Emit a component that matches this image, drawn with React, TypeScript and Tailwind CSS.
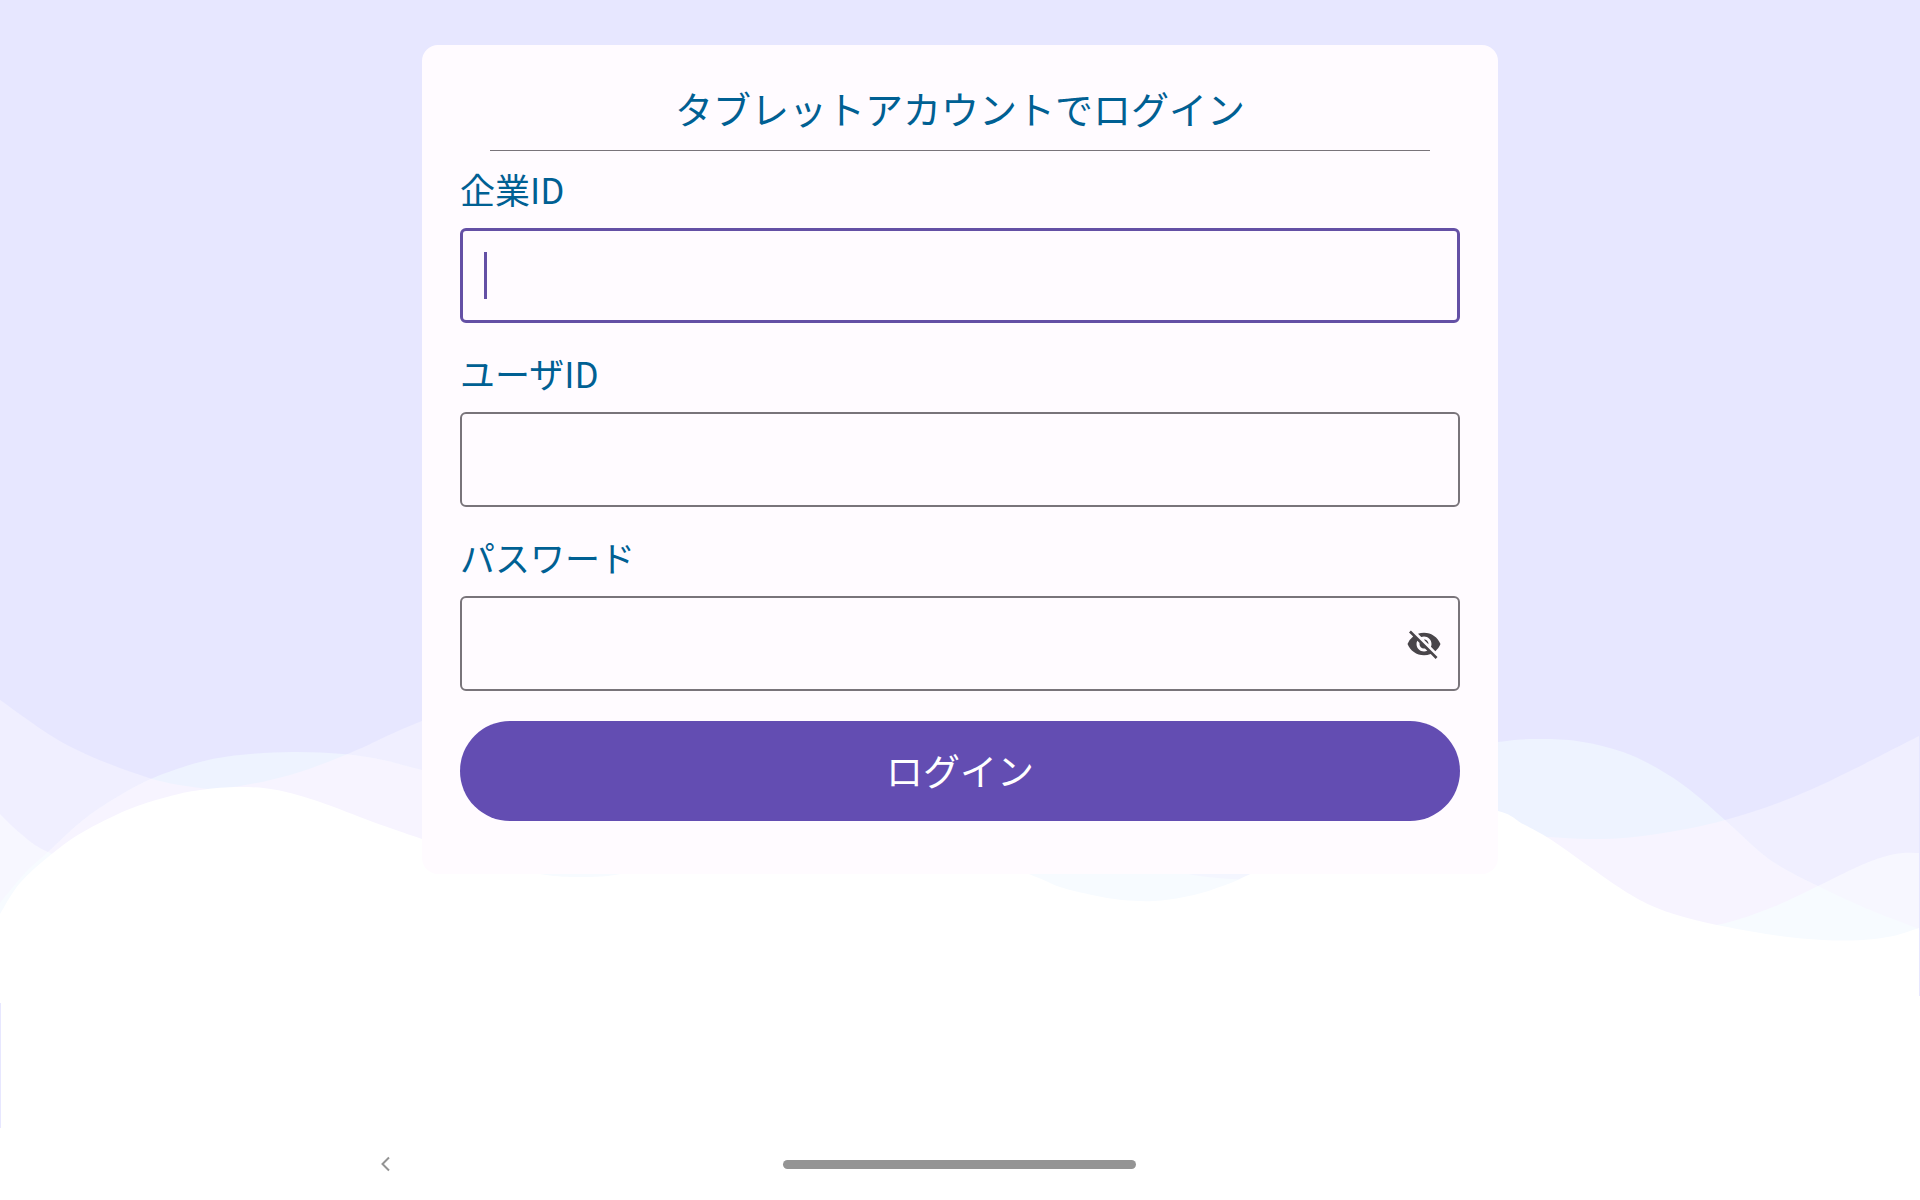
import { useState } from "react";
import { MdVisibilityOff, MdVisibility } from "react-icons/md";

type Point = [number, number];

/* Smooth curve through the given points (Catmull-Rom converted to cubic segments). */
function curve(points: Point[]): string {
  let d = `M${points[0][0]} ${points[0][1]}`;
  for (let i = 0; i < points.length - 1; i++) {
    const a = points[Math.max(i - 1, 0)];
    const b = points[i];
    const c = points[i + 1];
    const e = points[Math.min(i + 2, points.length - 1)];
    const c1 = [b[0] + (c[0] - a[0]) / 6, b[1] + (c[1] - a[1]) / 6];
    const c2 = [c[0] - (e[0] - b[0]) / 6, c[1] - (e[1] - b[1]) / 6];
    d += `C${c1[0]} ${c1[1]} ${c2[0]} ${c2[1]} ${c[0]} ${c[1]}`;
  }
  return d;
}

const wave = (points: Point[]) => `${curve(points)}V1128H0Z`;

const WAVE_FAR = wave([
  [0, 700], [67, 745], [143, 776], [193, 787], [227, 788], [290, 775], [350, 753], [422, 721],
  [560, 670], [700, 640], [850, 650], [1000, 700], [1200, 770], [1400, 815], [1500, 832],
  [1587, 839], [1650, 835], [1725, 820], [1810, 790], [1919, 736],
]);

const WAVE_MIDDLE = wave([
  [0, 903], [25, 873], [48, 852], [83, 820], [117, 797], [153, 778], [200, 762], [240, 755], [293, 752],
  [343, 754], [383, 760], [422, 770], [600, 815], [800, 850], [1000, 840], [1200, 800], [1400, 760],
  [1498, 742], [1545, 739], [1583, 742], [1623, 752], [1657, 768], [1690, 790], [1725, 820],
  [1760, 852], [1783, 868], [1818, 886], [1863, 907], [1919, 929],
]);

const WAVE_NEAR = wave([
  [0, 814], [20, 833], [48, 852], [120, 880], [300, 890], [480, 860], [700, 820], [900, 820],
  [1200, 850], [1500, 920], [1620, 940], [1717, 925], [1773, 907], [1818, 886], [1857, 867],
  [1883, 857], [1903, 853], [1919, 853],
]);

const WAVE_FRONT = wave([
  [0, 914], [20, 883], [53, 853], [83, 832], [127, 810], [167, 797], [200, 790], [240, 787],
  [277, 790], [320, 802], [373, 822], [422, 839], [490, 862], [540, 874], [580, 877], [626, 873],
  [720, 850], [820, 830], [920, 836], [1026, 873], [1060, 887], [1092, 895], [1122, 900],
  [1154, 901], [1184, 897], [1214, 889], [1252, 873], [1340, 825], [1430, 800], [1498, 811],
  [1523, 824], [1550, 839], [1587, 865], [1623, 890], [1650, 905], [1677, 915], [1717, 925],
  [1773, 935], [1823, 940], [1863, 940], [1893, 936], [1919, 928],
]);

function Waves() {
  return (
    <svg
      className="absolute inset-0 -z-10 h-full w-full"
      viewBox="0 0 1920 1200"
      preserveAspectRatio="none"
      aria-hidden="true"
    >
      <defs>
        <clipPath id="far"><path d={WAVE_FAR} /></clipPath>
        <clipPath id="middle"><path d={WAVE_MIDDLE} /></clipPath>
      </defs>
      <path d={WAVE_FAR} fill="#f0efff" />
      <path d={WAVE_MIDDLE} fill="#eef3ff" />
      <path d={WAVE_MIDDLE} fill="#f7f4ff" clipPath="url(#far)" />
      <path d={WAVE_NEAR} fill="#f7f7ff" />
      <path d={WAVE_NEAR} fill="#f7fbff" clipPath="url(#middle)" />
      <path d="M1018 860H1256V905H1018Z" fill="#f7fbff" />
      <path d="M1188 860H1256V880Q1214 879 1188 874Z" fill="#f4f6ff" />
      <path d={WAVE_FRONT} fill="#ffffff" />
      <path d="M1918 996H1920V1128H1918Z" fill="#ffffff" />
      <path d="M0 1003H1V1128H0Z" fill="#e7e7ff" />
      <path d="M0 1128H1920V1200H0Z" fill="#ffffff" />
    </svg>
  );
}

const labelClass = "block text-[35px] leading-[38px] text-[#006093]";
const inputClass =
  "block h-[95px] w-full rounded-md border-2 border-[#79747a] bg-transparent px-6 text-[35px] text-[#1c1b1f] outline-none";

export default function App() {
  const [company, setCompany] = useState("");
  const [visible, setVisible] = useState(false);

  return (
    <div className="relative isolate flex min-h-screen flex-col bg-[#e7e7ff] font-['Noto_Sans_CJK_JP',sans-serif]">
      <Waves />
      <main className="mx-auto mt-[45px] w-full max-w-[1076px] rounded-2xl bg-[#fffbff] px-[38px] pt-[35px] pb-[53px]">
        <h1 className="mx-[30px] border-b border-[#79747a] pb-[14px] text-center text-[38px] leading-14 text-[#006093]">
          タブレットアカウントでログイン
        </h1>
        <form className="mt-[19px]" onSubmit={(e) => e.preventDefault()}>
          <div className="flex flex-col gap-[31px]">
            <div>
              <label htmlFor="company" className={labelClass}>企業ID</label>
              <div className="relative mt-5">
                <input
                  id="company"
                  type="text"
                  value={company}
                  onChange={(e) => setCompany(e.target.value)}
                  className="block h-[95px] w-full rounded-md border-3 border-[#6450a5] bg-transparent px-6 text-[35px] text-[#1c1b1f] caret-[#6450a5] outline-none"
                />
                {company === "" && (
                  <span className="pointer-events-none absolute top-6 left-6 h-[47px] w-[3px] bg-[#6450a5]" />
                )}
              </div>
            </div>
            <div>
              <label htmlFor="user" className={labelClass}>ユーザID</label>
              <div className="mt-5">
                <input id="user" type="text" className={inputClass} />
              </div>
            </div>
            <div>
              <label htmlFor="password" className={labelClass}>パスワード</label>
              <div className="relative mt-5">
                <input id="password" type={visible ? "text" : "password"} className={inputClass} />
                <button
                  type="button"
                  aria-label="パスワードを表示"
                  onClick={() => setVisible(!visible)}
                  className="absolute inset-y-0 right-0 flex w-18 items-center justify-center text-[#49454a]"
                >
                  {visible ? <MdVisibility size={36} /> : <MdVisibilityOff size={36} />}
                </button>
              </div>
            </div>
          </div>
          <button
            type="submit"
            className="mt-[30px] flex h-[100px] w-full items-center justify-center rounded-full bg-[#634db2] text-[37px] text-white"
          >
            ログイン
          </button>
        </form>
      </main>
      <footer className="mt-auto grid h-[72px] grid-cols-[1fr_auto_1fr] items-center pr-px">
        <button type="button" aria-label="戻る" className="mr-[392px] justify-self-end">
          <svg width="11" height="16" viewBox="0 0 11 16" fill="none" stroke="#939393" strokeWidth="2">
            <path d="M9 1.5L2.500 8L9 14.500" />
          </svg>
        </button>
        <span className="h-[9px] w-[353px] rounded-full bg-[#949494]" />
      </footer>
    </div>
  );
}
